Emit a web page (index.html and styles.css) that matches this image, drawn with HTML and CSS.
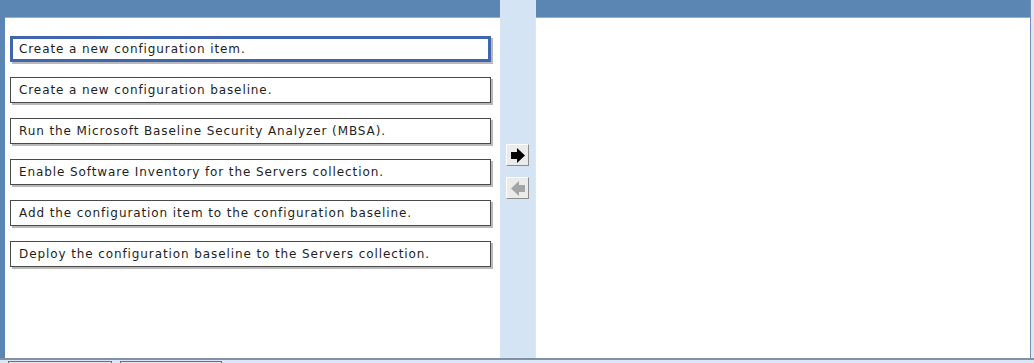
FILE: index.html
```html
<!DOCTYPE html>
<html lang="en">
<head>
    <meta charset="UTF-8">
    <title>Build List</title>
    <link rel="stylesheet" href="styles.css">
</head>
<body>
    <div class="workspace">
        <div class="panel source">
            <div class="panel-head"></div>
            <div class="panel-body">
                <ul class="items">
                    <li class="item selected">Create a new configuration item.</li>
                    <li class="item">Create a new configuration baseline.</li>
                    <li class="item">Run the Microsoft Baseline Security Analyzer (MBSA).</li>
                    <li class="item">Enable Software Inventory for the Servers collection.</li>
                    <li class="item">Add the configuration item to the configuration baseline.</li>
                    <li class="item">Deploy the configuration baseline to the Servers collection.</li>
                </ul>
            </div>
        </div>

        <div class="controls">
            <button class="move" title="Move right">
                <svg width="16" height="17" viewBox="0 0 16 17">
                    <path d="M1 5 H7 V1 L15 8.5 L7 16 V12 H1 Z" fill="#000"/>
                </svg>
            </button>
            <button class="move" title="Move left" disabled>
                <svg width="16" height="17" viewBox="0 0 16 17">
                    <path d="M15 5 H9 V1 L1 8.5 L9 16 V12 H15 Z" fill="#a4a4a4"/>
                </svg>
            </button>
        </div>

        <div class="panel target">
            <div class="panel-head"></div>
            <div class="panel-body"></div>
        </div>
    </div>

    <div class="footer">
        <button class="nav-btn"></button>
        <button class="nav-btn"></button>
    </div>
</body>
</html>
```

FILE: styles.css
```css
* {
    margin: 0;
    padding: 0;
    box-sizing: border-box;
}

body {
    font-family: 'DejaVu Sans', Verdana, sans-serif;
    background: #dbe7f5;
    width: 1034px;
    height: 363px;
    overflow: hidden;
}

.workspace {
    display: flex;
    height: 358px;
}

.panel {
    display: flex;
    flex-direction: column;
}

.panel-head {
    height: 18px;
    background: #5b86b4;
    border-bottom: 1px solid #8fb0d2;
}

.panel-body {
    flex: 1;
    background: #fff;
}

.source {
    width: 500px;
    border-left: 5px solid #5b86b4;
}

.target {
    width: 495px;
    margin-left: 1px;
    border-right: 1px solid #6f8fb5;
}

.items {
    list-style: none;
    padding: 18px 0 0 5px;
    display: flex;
    flex-direction: column;
    gap: 15px;
}

.item {
    width: 481px;
    height: 26px;
    border: 1px solid #4a4a4a;
    box-shadow: 2px 2px 0 #b9b9b9;
    padding-left: 8px;
    font-size: 12px;
    letter-spacing: 0.9px;
    line-height: 24px;
    color: #1e1e1e;
    white-space: nowrap;
}

.item.selected {
    border: 3px solid #4166ad;
    padding-left: 6px;
    line-height: 20px;
}

.controls {
    width: 35px;
    background: #d5e4f4;
    display: flex;
    flex-direction: column;
    align-items: center;
    padding-top: 144px;
    gap: 11px;
}

.move {
    width: 23px;
    height: 22px;
    background: #ebebeb;
    border: 1px solid;
    border-color: #fff #8c8c8c #8c8c8c #fff;
    display: flex;
    align-items: center;
    justify-content: center;
}

.footer {
    border-top: 2px solid #7f90a8;
    display: flex;
    gap: 8px;
    padding: 1px 0 0 8px;
}

.nav-btn {
    width: 104px;
    height: 20px;
    background: #e6e6e6;
    border: 1px solid #6f6f6f;
}

.nav-btn + .nav-btn {
    width: 102px;
}
```
